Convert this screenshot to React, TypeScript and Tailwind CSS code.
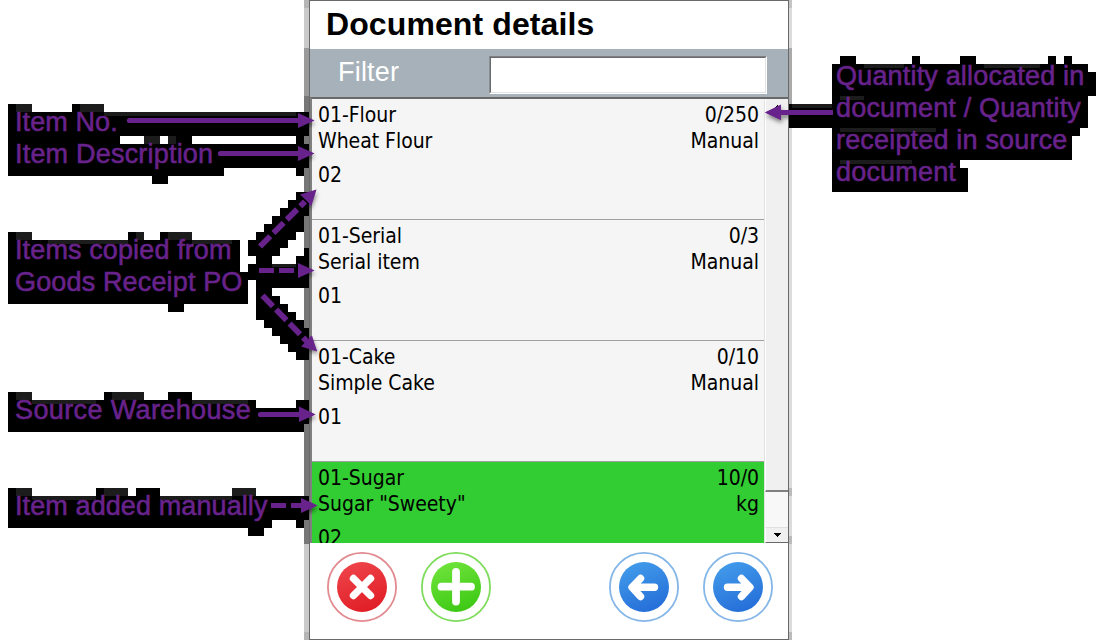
import React from "react";

const PURPLE = "#68228b";

type Item = {
  code: string;
  name: string;
  warehouse: string;
  quantity: string;
  unit: string;
  added?: boolean;
};

const items: Item[] = [
  { code: "01-Flour", name: "Wheat Flour", warehouse: "02", quantity: "0/250", unit: "Manual" },
  { code: "01-Serial", name: "Serial item", warehouse: "01", quantity: "0/3", unit: "Manual" },
  { code: "01-Cake", name: "Simple Cake", warehouse: "01", quantity: "0/10", unit: "Manual" },
  { code: "01-Sugar", name: 'Sugar "Sweety"', warehouse: "02", quantity: "10/0", unit: "kg", added: true },
];

// Blocky black backing behind the callouts, on an 8px grid.
function Backing() {
  return (
    <svg className="pointer-events-none absolute inset-0" width="1115" height="640" shapeRendering="crispEdges">
      <path d="M304 0h5v8h-5z" fill="#b5b5b5" />
      <path d="M304 8h5v40h-5z" fill="#cacaca" />
      <path d="M304 48h5v48h-5z" fill="#9a9a9a" />
      <path d="M304 96h5v448h-5z" fill="#777" />
      <path d="M304 544h5v88h-5z" fill="#cacaca" />
      <path d="M304 632h5v8h-5z" fill="#b5b5b5" />
      <path d="M789 0h3v8h-3z" fill="#c4c4c4" />
      <path d="M789 8h3v40h-3z" fill="#dcdcdc" />
      <path d="M789 48h3v56h-3z" fill="#aaa" />
      <path d="M789 128h3v360h-3z" fill="#dcdcdc" />
      <path d="M789 488h3v8h-3zM789 536h3v8h-3zM789 632h3v8h-3z" fill="#bbb" />
      <path d="M789 496h3v40h-3zM789 544h3v88h-3z" fill="#dcdcdc" />
      <g fill="#000">
        <path d="M8 104H32V112H72V104H104V112H309V136H304V144H309V168H304V176H296V168H224V176H168V184H152V176H8Z M120 136V144H144V136Z M160 136V144H168V136Z M192 136V144H296V136Z" fillRule="evenodd" />
        <path d="M8 232H32V240H128V232H144V240H160V232H192V240H240V272H248V304H184V312H168V304H8Z" />
        <path d="M296 192H309V216H304V232H296V240H288V248H280V256H272V264H296V256H304V248H309V288H272V296H280V304H288V312H296V320H304V328H309V360H296V352H288V344H280V336H272V328H264V320H256V280H240V272H248V264H256V256H248V240H256V232H264V224H272V216H280V208H288V200H296Z" />
        <path d="M8 392H32V400H104V392H144V400H168V392H192V400H256V408H296V400H309V424H304V432H8Z" />
        <path d="M8 488H32V496H96V488H128V496H136V488H160V496H232V488H256V496H309V520H304V528H296V520H272V528H264V536H248V528H8Z" />
        <path d="M789 104H832V64H840V56H856V64H912V56H920V64H960V56H976V64H1048V56H1056V64H1064V56H1072V64H1088V72H1096V96H1088V128H1080V136H1072V160H960V168H968V192H832V128H789Z" />
      </g>
      <path
        d="M16 104h16v8H16zM80 104h24v8H80zM104 112h192v4H104zM144 136h16v8h-16zM168 136h8v8h-8zM16 232h16v8H16zM136 232h8v8h-8zM168 232h24v8h-24zM48 240h80v4H48zM192 240h40v4h-40zM272 264h24v3h-24zM16 392h16v8H16zM112 392h32v8h-32zM32 400h64v4H32zM192 400h56v4h-56zM16 488h16v8H16zM104 488h24v8h-24zM232 488h24v8h-24zM32 496h64v4H32zM160 496h72v4h-72zM792 104h40v4h-40zM864 64h40v4h-40zM984 64h56v4h-56zM840 96h24v4h-24zM840 128h96v4h-96zM840 160h72v4h-72z"
        fill="#1c1c1c"
      />
    </svg>
  );
}

function Arrows() {
  return (
    <svg className="pointer-events-none absolute inset-0 z-20" width="1115" height="640" fill={PURPLE} stroke={PURPLE}>
      <defs>
        <filter id="soft" x="-20%" y="-50%" width="140%" height="240%">
          <feDropShadow dx="1" dy="3" stdDeviation="2" floodColor="#000" floodOpacity="0.5" />
        </filter>
        <clipPath id="screen">
          <path d="M309 0h480v640H309z" />
        </clipPath>
      </defs>
      <g stroke="none" filter="url(#soft)" clipPath="url(#screen)">
        <path d="M298 113L314 120.5L298 128zM298 146L314 153.5L298 161zM316 190L310 206L300 196zM298 263L314 270.5L298 278zM317 351L311 336L301 346zM299 407L315 414.5L299 422zM301 498L317 505.5L301 513zM781 105L765 112.5L781 120zM780 110h9v5h-9z" />
      </g>
      <g stroke="none">
        <path d="M298 113L314.500 120.5L298 128zM298 146L314.500 153.5L298 161zM316.500 189.500L311.500 205.500L300 194.500zM298 263L314.500 270.5L298 278zM317 351.500L312 335.500L301 346.500zM299 406.500L315.500 414.5L299 422zM301 498L317.500 505.5L301 513zM781 104.500L765 112.5L781 120z" />
      </g>
      <g fill="none" strokeWidth="5.200">
        <path d="M129.500 120.500H299M220.500 153.500H299M260.500 414.500H300" strokeLinecap="round" />
        <path d="M780 112.500H833" />
        <path d="M260 246.500L305 201.500" strokeWidth="5.800" strokeDasharray="14.500 4.500" />
        <path d="M259 270.500H274M279 270.500H294M271 505.500H286M291 505.500H303" />
        <path d="M262.500 295.500L307 341.500" strokeWidth="5.800" strokeDasharray="15 4.500" />
      </g>
    </svg>
  );
}

function Label({ className, children }: { className: string; children: React.ReactNode }) {
  return (
    <p
      className={`whitespace-nowrap font-['Liberation_Sans',Arial,sans-serif] text-[27px] leading-8 text-[#68228b] [-webkit-text-stroke:0.6px_#68228b] ${className}`}
    >
      {children}
    </p>
  );
}

function Row({ item }: { item: Item }) {
  return (
    <div
      className={`flex h-[121px] shrink-0 justify-between border-b border-[#a0a0a0] pl-[6px] pr-[5px] pt-[3px] leading-[26px] ${
        item.added ? "bg-[#32cd32]" : "bg-[#f5f5f5]"
      }`}
    >
      <div>
        <div>{item.code}</div>
        <div>{item.name}</div>
        <div className="mt-2">{item.warehouse}</div>
      </div>
      <div className="text-right">
        <div>{item.quantity}</div>
        <div>{item.unit}</div>
      </div>
    </div>
  );
}

type ActionKind = "cancel" | "add" | "back" | "next";

const glyphs: Record<ActionKind, string> = {
  cancel: "M26.500 26.500L43.500 43.500M43.500 26.500L26.500 43.500",
  add: "M35 20V49.500M20.500 34.700H50",
  back: "M45.500 35.300H24M31.500 26.500L23 35.300L31.500 44.500",
  next: "M24.500 35.300H46M38.500 26.500L47 35.300L38.500 44.500",
};

const tints: Record<ActionKind, [string, string, string]> = {
  cancel: ["#ee444a", "#e01c25", "#e28a90"],
  add: ["#6ee33a", "#3cc814", "#80dc5c"],
  back: ["#429bea", "#246dd8", "#84b6e8"],
  next: ["#429bea", "#246dd8", "#84b6e8"],
};

function ActionButton({ kind }: { kind: ActionKind }) {
  const [light, dark, ring] = tints[kind];
  return (
    <button aria-label={kind} className="size-[70px]">
      <svg viewBox="0 0 70 70" className="size-[70px]">
        <defs>
          <linearGradient id={kind} x1="0.3" y1="0" x2="0.7" y2="1">
            <stop stopColor={light} />
            <stop offset="1" stopColor={dark} />
          </linearGradient>
        </defs>
        <circle cx="35" cy="35" r="34.100" fill="#fff" stroke={ring} strokeWidth="1.800" />
        <circle cx="35" cy="35" r="25" fill={`url(#${kind})`} />
        <path
          d={glyphs[kind]}
          fill="none"
          stroke="#fff"
          strokeWidth={kind === "add" ? 7.8 : 7.4}
          strokeLinecap="round"
          strokeLinejoin="round"
        />
      </svg>
    </button>
  );
}

export default function App() {
  return (
    <div className="relative flex h-[640px] w-[1115px] overflow-hidden bg-white">
      <Backing />
      <aside className="relative z-10 flex w-[309px] shrink-0 flex-col pl-[15px] pt-[106px]">
        <Label className="tracking-[0.1px]">Item No.</Label>
        <Label className="tracking-[0.2px]">Item Description</Label>
        <Label className="mt-16 tracking-[0.12px]">Items copied from</Label>
        <Label className="tracking-[0.15px]">Goods Receipt PO</Label>
        <Label className="mt-24 tracking-[0.37px]">Source Warehouse</Label>
        <Label className="mt-16 tracking-[0.1px]">Item added manually</Label>
      </aside>

      <main className="relative z-10 flex w-[480px] shrink-0 flex-col border border-[#696969] bg-white">
        <h1 className="h-12 pl-4 font-['Liberation_Sans',Arial,sans-serif] text-[32px] font-bold leading-[46px] tracking-[0.1px] text-black">
          Document details
        </h1>
        <div className="flex h-12 items-start bg-[#a6b1b9] pl-7">
          <span className="w-[151px] font-['Liberation_Sans',Arial,sans-serif] text-[27px] leading-[47px] tracking-[0.2px] text-white">
            Filter
          </span>
          <div className="mt-[7px] border border-b-white border-l-[#8a8f93] border-r-white border-t-[#7c8084]">
            <input
              aria-label="Filter"
              className="block h-[36px] w-[276px] border border-b-[#e3e3e3] border-l-[#696969] border-r-[#e3e3e3] border-t-[#696969] bg-white outline-none"
            />
          </div>
        </div>
        <div className="flex h-[446px] border-l-2 border-t-2 border-l-[#808080] border-t-[#696969]">
          <div className="flex w-[452px] flex-col overflow-hidden font-['DejaVu_Sans_Condensed','DejaVu_Sans',sans-serif] text-[21px] tracking-[-0.03px] text-black">
            {items.map((item) => (
              <Row key={item.code} item={item} />
            ))}
          </div>
          <div className="flex flex-1 flex-col border-l border-[#e3e3e3] bg-[#f0f0f0]">
            <div className="flex flex-1 justify-center border-b-2 border-l border-b-[#808080] border-l-white bg-[#f0f0f0] pt-[6px]">
              <svg width="8" height="4" shapeRendering="crispEdges">
                <path d="M4 0L8 4H0z" />
              </svg>
            </div>
            <div className="h-[35px] bg-[#f8f8f8]" />
            <div className="flex h-4 items-center justify-center border-b border-l border-t border-b-[#696969] border-l-white border-t-[#e0e0e0] bg-[#f0f0f0]">
              <svg width="8" height="4" shapeRendering="crispEdges">
                <path d="M0 0h8L4 4z" />
              </svg>
            </div>
          </div>
        </div>
        <div className="flex justify-between pl-[17px] pr-[15px] pt-[9px]">
          <div className="flex gap-6">
            <ActionButton kind="cancel" />
            <ActionButton kind="add" />
          </div>
          <div className="flex gap-6">
            <ActionButton kind="back" />
            <ActionButton kind="next" />
          </div>
        </div>
      </main>

      <aside className="relative z-10 pl-[47px] pt-[60px]">
        <Label className="tracking-[0.18px]">
          Quantity allocated in
          <br />
          document / Quantity
          <br />
          receipted in source
          <br />
          document
        </Label>
      </aside>
      <Arrows />
    </div>
  );
}
